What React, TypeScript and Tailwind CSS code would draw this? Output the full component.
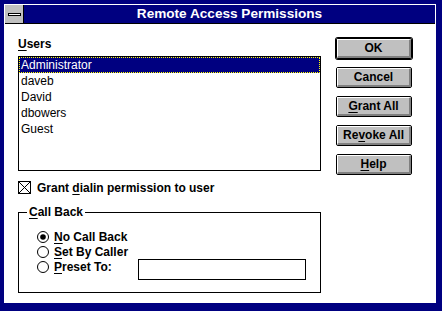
import type { ReactNode } from 'react';

const font = { fontFamily: '"Liberation Sans", Arial, sans-serif' };

function U({ children }: { children: ReactNode }) {
  return <span className="underline underline-offset-[2px] decoration-[1px]">{children}</span>;
}

function Button({ children, isDefault = false }: { children: ReactNode; isDefault?: boolean }) {
  return (
    <div
      className={`h-[21px] w-[76px] rounded-[2px] border border-black ${
        isDefault ? 'ring-1 ring-black' : ''
      }`}
    >
      <div className="flex h-full w-full items-center justify-center border-t border-l border-b-2 border-r-2 border-t-white border-l-white border-b-[#808080] border-r-[#808080] bg-[#c0c0c0] text-[12px] font-bold leading-none text-black">
        {children}
      </div>
    </div>
  );
}

function Radio({ checked = false }: { checked?: boolean }) {
  return (
    <svg width="12" height="12" viewBox="0 0 12 12" className="shrink-0">
      <circle cx="6" cy="6" r="5.5" fill="white" stroke="black" strokeWidth="1" />
      {checked && <circle cx="6" cy="6" r="2.8" fill="black" />}
    </svg>
  );
}

const users = ['Administrator', 'daveb', 'David', 'dbowers', 'Guest'];

export default function App() {
  return (
    <div style={font} className="h-[311px] w-[442px] bg-[#000080] pt-[4px] pl-[4px] pr-[6px] pb-[8px]">
      <div className="flex h-full flex-col bg-white p-[1px]">
        {/* title bar */}
        <div className="flex h-[19px] shrink-0 border-b border-black bg-[#000080]">
          <div className="flex w-[19px] items-center justify-center border-r border-black bg-[#c0c0c0]">
            <div className="h-[3px] w-[13px] border border-black bg-white" />
          </div>
          <div className="flex flex-1 items-center justify-center text-[13.6px] font-bold text-white">
            Remote Access Permissions
          </div>
        </div>

        {/* body */}
        <div className="flex flex-1 pl-[13px] pt-[12px]">
          <div className="flex w-[303px] flex-col">
            <div className="h-[16px] text-[12px] leading-[16px] font-bold text-black">
              <U>U</U>sers
            </div>
            <div className="mt-[4px] h-[115px] border border-black bg-white">
              {users.map((u, i) => (
                <div
                  key={u}
                  className={`h-[16px] pl-[1px] text-[12px] leading-[14px] ${
                    i === 0
                      ? 'border border-dotted border-[#ffff00] bg-[#000080] text-white'
                      : 'border border-transparent text-black'
                  }`}
                >
                  {u}
                </div>
              ))}
            </div>

            <div className="mt-[10px] flex h-[13px] items-center gap-[6px] text-[12px] font-bold text-black">
              <svg width="13" height="13" viewBox="0 0 13 13" className="shrink-0">
                <rect x="0.5" y="0.5" width="12" height="12" fill="white" stroke="black" />
                <path d="M1 1 L12 12 M12 1 L1 12" stroke="black" strokeWidth="1" />
              </svg>
              <span>
                Grant <U>d</U>ialin permission to user
              </span>
            </div>

            {/* call back group */}
            <div className="relative mt-[18px] h-[81px] border border-black pt-[16px] pl-[18px]">
              <div className="absolute -top-[9px] left-[8px] bg-white px-[2px] text-[12px] leading-[16px] font-bold text-black">
                <U>C</U>all Back
              </div>
              <div className="flex h-[15px] items-center gap-[5px] text-[12px] font-bold text-black">
                <Radio checked />
                <span>
                  <U>N</U>o Call Back
                </span>
              </div>
              <div className="flex h-[15px] items-center gap-[5px] text-[12px] font-bold text-black">
                <Radio />
                <span>
                  <U>S</U>et By Caller
                </span>
              </div>
              <div className="flex h-[15px] items-center gap-[5px] text-[12px] font-bold text-black">
                <Radio />
                <span className="w-[79px] shrink-0">
                  <U>P</U>reset To:
                </span>
                <div className="mt-[6px] h-[21px] w-[168px] shrink-0 border border-black bg-white" />
              </div>
            </div>
          </div>

          <div className="ml-[15px] flex flex-col gap-[8px] pt-[2px]">
            <Button isDefault>OK</Button>
            <Button>Cancel</Button>
            <Button>
              <span>
                <U>G</U>rant All
              </span>
            </Button>
            <Button>
              <span>
                Re<U>v</U>oke All
              </span>
            </Button>
            <Button>
              <span>
                <U>H</U>elp
              </span>
            </Button>
          </div>
        </div>
      </div>
    </div>
  );
}
